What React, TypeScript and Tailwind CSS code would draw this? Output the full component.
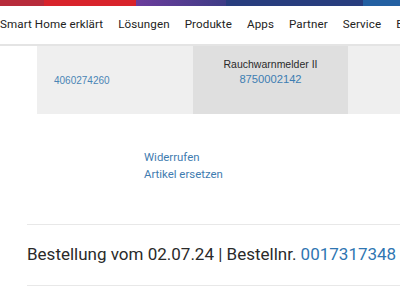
export default function App() {
  const nav = ["Smart Home erklärt", "Lösungen", "Produkte", "Apps", "Partner", "Service", "Business"];
  return (
    <div className="w-[400px] h-[294px] overflow-hidden bg-white font-['Roboto',sans-serif]">
      {/* supergraphic bar */}
      <div className="flex h-[6px]">
        <div className="w-[44px] bg-[#b72b3b]" />
        <div className="w-[92px] bg-[#d8232b]" />
        <div className="w-[90px] bg-gradient-to-r from-[#6b3c9c] to-[#3e3c86]" />
        <div className="w-[137px] bg-[#283d7e]" />
        <div className="flex-1 bg-[#2360a2]" />
      </div>
      <nav className="h-[40px] flex items-center gap-[15px] whitespace-nowrap text-[11.6px] tracking-[0.1px] text-[#222] border-b-2 border-[#e4e4e4]">
        {nav.map((n) => (
          <span key={n}>{n}</span>
        ))}
      </nav>
      <div className="flex h-[68px] ml-[37px] font-['Liberation_Sans',sans-serif]">
        <div className="w-[156px] bg-[#efefef] flex items-center pl-[17px] pt-[1px] text-[10px] text-[#4a85b5]">
          4060274260
        </div>
        <div className="w-[155px] bg-[#dfdfdf] flex flex-col items-center pt-[11px] leading-[14px]">
          <span className="text-[10.5px] text-[#2a2a2a]">Rauchwarnmelder II</span>
          <span className="text-[11.2px] text-[#3d7db2] mt-[1px]">8750002142</span>
        </div>
        <div className="flex-1 bg-[#efefef]" />
      </div>
      <div className="ml-[144px] mt-[35px] flex flex-col text-[11.4px] leading-[17px] text-[#3f7cb0]">
        <span>Widerrufen</span>
        <span>Artikel ersetzen</span>
      </div>
      <div className="ml-[27px] mt-[41px] border-t border-[#e8e8e8] h-[62px] flex items-center border-b whitespace-nowrap text-[17px] text-[#2a2a2a]">
        Bestellung vom 02.07.24 | Bestellnr.&nbsp;<span className="text-[#2f76b2]">0017317348</span>
      </div>
    </div>
  );
}
